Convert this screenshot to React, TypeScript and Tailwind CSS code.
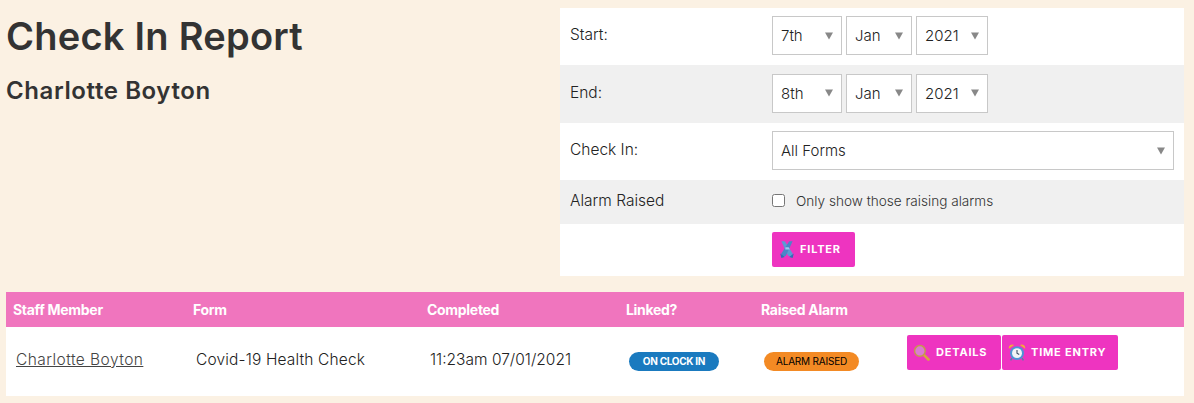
import type { ReactNode } from "react";

const font = "font-['Inter','Liberation_Sans',sans-serif]";

function Arrow() {
  return (
    <span className="pointer-events-none absolute right-[9px] top-1/2 h-0 w-0 -translate-y-1/2 border-x-[4px] border-t-[7px] border-x-transparent border-t-[#888888]" />
  );
}

function Select({ value, width }: { value: string; width: string }) {
  return (
    <div className={`relative ${width}`}>
      <select
        defaultValue={value}
        className="h-[39px] w-full appearance-none rounded-none border border-[#c8c8c8] bg-white pl-2 pt-[2px] text-[15px] font-light text-[#222222] outline-none"
      >
        <option>{value}</option>
      </select>
      <Arrow />
    </div>
  );
}

function FilterRow({ label, tone, height, children }: { label?: string; tone?: boolean; height: string; children: ReactNode }) {
  return (
    <div className={`flex items-center ${height} ${tone ? "bg-[#f0f0f0]" : "bg-white"}`}>
      <div className="w-[212px] pl-[10px] pb-[3px] text-[15.5px] font-light text-[#222222]">{label}</div>
      <div className="flex flex-1 items-center gap-1 pb-[2px] pr-[10px]">{children}</div>
    </div>
  );
}

function CrossIcon() {
  return (
    <svg viewBox="0 0 16 16" className="h-[18px] w-[18px] shrink-0">
      <path d="M3 1h3l7 11-1 3-3-1z" fill="#5b9bd5" />
      <path d="M13 1h-3L3 12l1 3 3-1z" fill="#4a86c8" />
      <path d="M6.5 6.5h3l1 2h-4z" fill="#9cc9ee" />
      <path d="M2 12l4 3-3 1zM14 12l-4 3 3 1z" fill="#2f6fb5" />
    </svg>
  );
}

function MagnifierIcon() {
  return (
    <svg viewBox="0 0 16 16" className="h-[17px] w-[17px] shrink-0">
      <path d="M10 10l4.5 4.5" stroke="#d9a441" strokeWidth="2.6" strokeLinecap="round" />
      <circle cx="6.5" cy="6.5" r="5" fill="#dc7ad4" stroke="#c49a4a" strokeWidth="1.4" />
    </svg>
  );
}

function ClockIcon() {
  return (
    <svg viewBox="0 0 16 16" className="h-[18px] w-[18px] shrink-0">
      <path d="M.8 5a3 3 0 0 1 4.6-3.2zM15.2 5a3 3 0 0 0-4.6-3.2z" fill="#f2a93b" />
      <path d="M3.5 13.5l-1.2 2M12.5 13.5l1.2 2" stroke="#5a7fa8" strokeWidth="1.4" />
      <circle cx="8" cy="9" r="6.2" fill="#4f93d6" />
      <circle cx="8" cy="9" r="4.4" fill="#f3f4f6" />
      <path d="M8 6.3V9l2 1.3" stroke="#44546a" strokeWidth="1" fill="none" />
    </svg>
  );
}

function ActionButton({ icon, label, width, gap }: { icon: ReactNode; label: string; width: string; gap: string }) {
  return (
    <button className={`flex h-[35px] items-center rounded-[2px] bg-[#ee34c0] pl-[6px] text-[11px] font-bold tracking-[0.8px] text-white ${gap} ${width}`}>
      {icon}
      {label}
    </button>
  );
}

export default function App() {
  return (
    <div className={`h-[403px] w-[1194px] overflow-hidden bg-[#fbf1e3] ${font}`}>
      <div className="flex pt-2">
        <div className="w-[560px] pl-[6px] text-[#333333]">
          <h1 className="text-[38px] font-semibold leading-[56px] tracking-[0.25px]">Check In Report</h1>
          <h2 className="mt-[11px] text-[24px] font-semibold leading-[32px] tracking-[0.6px]">Charlotte Boyton</h2>
        </div>
        <div className="w-[624px]">
          <FilterRow label="Start:" height="h-[57px]">
            <Select value="7th" width="w-[70px]" />
            <Select value="Jan" width="w-[66px]" />
            <Select value="2021" width="w-[72px]" />
          </FilterRow>
          <FilterRow label="End:" tone height="h-[58px]">
            <Select value="8th" width="w-[70px]" />
            <Select value="Jan" width="w-[66px]" />
            <Select value="2021" width="w-[72px]" />
          </FilterRow>
          <FilterRow label="Check In:" height="h-[57px]">
            <Select value="All Forms" width="w-[402px]" />
          </FilterRow>
          <FilterRow label="Alarm Raised" tone height="h-[44px]">
            <label className="flex items-center text-[13.6px] font-light text-[#333333]">
              <input type="checkbox" className="mr-[11px] h-[13px] w-[13px]" />
              Only show those raising alarms
            </label>
          </FilterRow>
          <FilterRow height="h-[52px]">
            <ActionButton icon={<CrossIcon />} label="FILTER" width="w-[83px]" gap="gap-[4px]" />
          </FilterRow>
        </div>
      </div>

      <table className="ml-[6px] mt-4 w-[1178px] table-fixed border-collapse">
        <thead>
          <tr className="h-[35px] bg-[#f075be] text-left text-[14px] font-extrabold tracking-[-0.3px] text-white">
            <th className="w-[180px] pl-[7px]">Staff Member</th>
            <th className="w-[234px] pl-[7px]">Form</th>
            <th className="w-[199px] pl-[7px]">Completed</th>
            <th className="w-[135px] pl-[7px]">Linked?</th>
            <th className="w-[143px] pl-[7px]">Raised Alarm</th>
            <th />
          </tr>
        </thead>
        <tbody>
          <tr className="h-[69px] bg-white text-[15.5px] font-light text-[#222222]">
            <td className="pb-[4px] pl-[10px]">
              <a href="#" className="tracking-[0.45px] text-[#444444] underline">Charlotte Boyton</a>
            </td>
            <td className="pb-[4px] pl-[10px] tracking-[0.15px]">Covid-19 Health Check</td>
            <td className="pb-[4px] pl-[10px]">11:23am 07/01/2021</td>
            <td className="pl-[10px]">
              <span className="flex h-[19px] w-[90px] items-center justify-center rounded-full bg-[#1a7abf] text-[10px] font-bold tracking-[-0.3px] text-white">ON CLOCK IN</span>
            </td>
            <td className="pl-[10px]">
              <span className="flex h-[19px] w-[95px] items-center justify-center rounded-full bg-[#f38a24] text-[10px] font-normal tracking-[-0.2px] text-black">ALARM RAISED</span>
            </td>
            <td className="pl-[10px]">
              <div className="flex gap-px pb-[19px]">
                <ActionButton icon={<MagnifierIcon />} label="DETAILS" width="w-[94px]" gap="gap-[6px]" />
                <ActionButton icon={<ClockIcon />} label="TIME ENTRY" width="w-[116px]" gap="gap-[5px]" />
              </div>
            </td>
          </tr>
        </tbody>
      </table>
    </div>
  );
}
